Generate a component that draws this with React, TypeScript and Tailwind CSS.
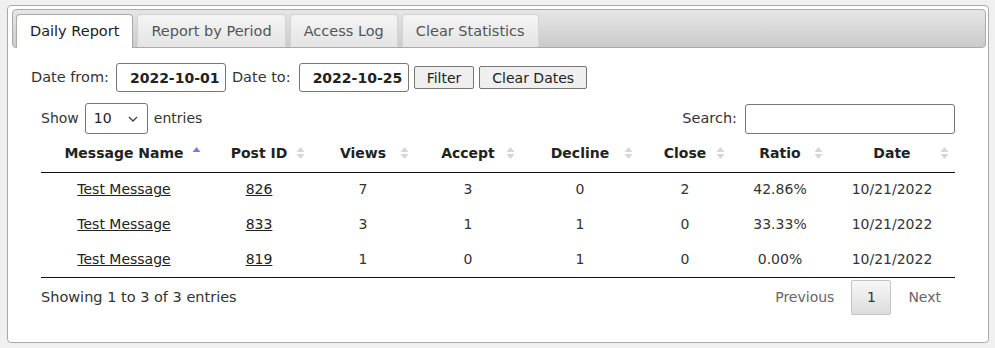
import React from "react";

const cols = [
  { name: "Message Name", w: 166, active: true },
  { name: "Post ID", w: 104 },
  { name: "Views", w: 104 },
  { name: "Accept", w: 106 },
  { name: "Decline", w: 118 },
  { name: "Close", w: 92 },
  { name: "Ratio", w: 98 },
  { name: "Date", w: 126 },
];

const rows = [
  ["Test Message", "826", "7", "3", "0", "2", "42.86%", "10/21/2022"],
  ["Test Message", "833", "3", "1", "1", "0", "33.33%", "10/21/2022"],
  ["Test Message", "819", "1", "0", "1", "0", "0.00%", "10/21/2022"],
];

function SortIcon({ active }: { active?: boolean }) {
  return (
    <svg width="9" height="16" viewBox="0 0 9 16" className="absolute right-[6px] top-1/2 -translate-y-1/2">
      {active ? (
        <polygon points="4.5,2 8.5,7 0.5,7" fill="#7d7dd9" />
      ) : (
        <>
          <polygon points="4.5,2 8.5,7 0.5,7" fill="#d6d6d6" />
          <polygon points="0.5,9 8.5,9 4.5,14" fill="#d6d6d6" />
        </>
      )}
    </svg>
  );
}

export default function App() {
  const tabs = ["Daily Report", "Report by Period", "Access Log", "Clear Statistics"];
  return (
    <div className="min-h-screen bg-[#f0f0f0] pt-[5px] pl-[7px] font-['DejaVu_Sans',sans-serif] text-[14px] text-[#333]">
      <div className="w-[982px] h-[338px] bg-white border border-[#aaaaaa] rounded-[4px] pt-[3px] pl-[4px] pr-[2px] flex flex-col">
        <div className="h-[39px] border border-[#aaaaaa] rounded-[4px] bg-gradient-to-b from-[#e6e6e6] to-[#cbcbcb] pt-[4px] pl-[3px] flex items-start gap-[4px] text-[14.5px]">
          {tabs.map((t, i) =>
            i === 0 ? (
              <div
                key={t}
                className="relative z-10 h-[34px] px-[13px] flex items-center bg-white border border-b-0 border-[#aaaaaa] rounded-t-[4px] text-[#212121] leading-none pb-[1px]"
              >
                {t}
              </div>
            ) : (
              <div
                key={t}
                className="h-[33px] px-[13px] flex items-center bg-gradient-to-b from-[#f5f5f5] via-[#ececec] to-[#e4e4e4] border border-b-0 border-[#d3d3d3] rounded-t-[4px] text-[#555] leading-none"
              >
                {t}
              </div>
            )
          )}
        </div>

        <div className="pl-[19px] pr-[20px] pt-[15px] flex flex-col">
          <div className="flex items-center h-[29px]">
            <span className="text-[14.5px]">Date from:</span>
            <input
              readOnly
              value="2022-10-01"
              className="ml-[7px] w-[110px] h-[29px] border border-[#767676] rounded-[3px] pl-[13px] font-bold text-[14px] text-[#222] outline-none"
            />
            <span className="ml-[6px] text-[14.5px]">Date to:</span>
            <input
              readOnly
              value="2022-10-25"
              className="ml-[8px] w-[110px] h-[29px] border border-[#767676] rounded-[3px] pl-[13px] font-bold text-[14px] text-[#222] outline-none"
            />
            <button className="ml-[5px] h-[23px] px-[12px] bg-[#efefef] border border-[#767676] rounded-[2px] text-[#222] leading-none">
              Filter
            </button>
            <button className="ml-[5px] h-[23px] px-[12px] bg-[#efefef] border border-[#767676] rounded-[2px] text-[#222] leading-none">
              Clear Dates
            </button>
          </div>

          <div className="mx-[10px] mt-[11px] flex flex-col">
            <div className="flex items-center justify-between h-[31px]">
              <div className="flex items-center">
                <span>Show</span>
                <div className="ml-[6px] w-[63px] h-[31px] border border-[#767676] rounded-[3px] flex items-center justify-between pl-[8px] pr-[9px] text-[#222]">
                  <span>10</span>
                  <svg width="10" height="6" viewBox="0 0 10 6">
                    <path d="M1 1 L5 5 L9 1" fill="none" stroke="#444" strokeWidth="1.4" />
                  </svg>
                </div>
                <span className="ml-[6px]">entries</span>
              </div>
              <div className="flex items-center">
                <span className="text-[14.5px]">Search:</span>
                <div className="ml-[8px] mr-[1px] w-[210px] h-[30px] border border-[#767676] rounded-[3px]" />
              </div>
            </div>

            <table className="table-fixed border-collapse w-[914px]">
              <colgroup>
                {cols.map((c) => (
                  <col key={c.name} style={{ width: c.w }} />
                ))}
              </colgroup>
              <thead>
                <tr className="border-b border-[#111]">
                  {cols.map((c) => (
                    <th key={c.name} className="relative h-[38px] p-0 pt-[1px] text-center font-bold text-[#222]">
                      {c.name}
                      <SortIcon active={c.active} />
                    </th>
                  ))}
                </tr>
              </thead>
              <tbody className="border-b border-[#111]">
                {rows.map((r, ri) => (
                  <tr key={ri}>
                    {r.map((v, ci) => (
                      <td key={ci} className="h-[35px] p-0 text-center text-[#333]">
                        {ci < 2 ? <span className="underline text-[#222]">{v}</span> : v}
                      </td>
                    ))}
                  </tr>
                ))}
              </tbody>
            </table>

            <div className="flex items-start justify-between mt-[2px]">
              <div className="pt-[7px] text-[14.5px]">Showing 1 to 3 of 3 entries</div>
              <div className="flex items-center text-[#666]">
                <span className="ml-[2px] px-[14px] h-[35px] border border-transparent flex items-center">Previous</span>
                <span className="ml-[2px] w-[40px] h-[35px] flex items-center justify-center border border-[#c4c4c4] rounded-[2px] bg-gradient-to-b from-[#f8f8f8] to-[#dcdcdc] text-[#333]">
                  1
                </span>
                <span className="ml-[2px] px-[14px] h-[35px] border border-transparent flex items-center">Next</span>
              </div>
            </div>
          </div>
        </div>
      </div>
    </div>
  );
}
